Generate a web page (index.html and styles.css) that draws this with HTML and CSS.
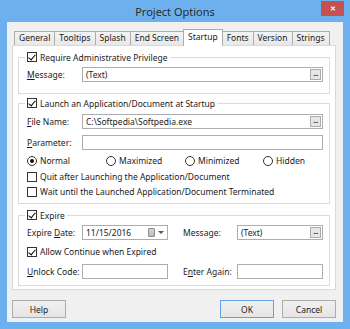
FILE: index.html
```html
<!doctype html>
<html lang="en">
  <head>
    <meta charset="utf-8">
    <title>Project Options</title>
    <link rel="stylesheet" href="styles.css">
  </head>
  <body>
    <div class="window">
      <div class="titlebar">
        <span class="title">Project Options</span>
        <span class="close">&#10005;</span>
      </div>

      <div class="client">
        <div class="tabs">
          <span class="tab">General</span>
          <span class="tab">Tooltips</span>
          <span class="tab">Splash</span>
          <span class="tab">End Screen</span>
          <span class="tab active">Startup</span>
          <span class="tab">Fonts</span>
          <span class="tab">Version</span>
          <span class="tab">Strings</span>
        </div>

        <div class="page">
          <!-- Admin -->
          <fieldset class="group g-admin">
            <legend><span class="check on"></span>Require Administrative Privilege</legend>
            <div class="row r-msg">
              <span class="lbl"><u>M</u>essage:</span>
              <div class="field grow">(Text)<span class="dots">...</span></div>
            </div>
          </fieldset>

          <!-- Launch -->
          <fieldset class="group g-launch">
            <legend><span class="check on"></span>Launch an Application/Document at Startup</legend>
            <div class="row r-file">
              <span class="lbl"><u>F</u>ile Name:</span>
              <div class="field grow">C:\Softpedia\Softpedia.exe<span class="dots">...</span></div>
            </div>
            <div class="row r-param">
              <span class="lbl"><u>P</u>arameter:</span>
              <div class="field grow"></div>
            </div>
            <div class="row radios">
              <span class="opt"><span class="radio on"></span>Normal</span>
              <span class="opt"><span class="radio"></span>Maximized</span>
              <span class="opt"><span class="radio"></span>Minimized</span>
              <span class="opt"><span class="radio"></span>Hidden</span>
            </div>
            <div class="row r-quit">
              <span class="check"></span>Quit after Launching the Application/Document
            </div>
            <div class="row r-wait">
              <span class="check"></span>Wait until the Launched Application/Document Terminated
            </div>
          </fieldset>

          <!-- Expire -->
          <fieldset class="group g-expire">
            <legend><span class="check on"></span>Expire</legend>
            <div class="row r-date">
              <span class="lbl">Expire <u>D</u>ate:</span>
              <div class="field short">11/15/2016
                <span class="cal"></span>
                <span class="arrow"></span>
              </div>
              <span class="lbl lbl2">Message:</span>
              <div class="field grow">(Text)<span class="dots">...</span></div>
            </div>
            <div class="row r-allow">
              <span class="check on"></span>Allow Continue when Expired
            </div>
            <div class="row r-unlock">
              <span class="lbl"><u>U</u>nlock Code:</span>
              <div class="field short"></div>
              <span class="lbl lbl2">E<u>n</u>ter Again:</span>
              <div class="field grow"></div>
            </div>
          </fieldset>
        </div>

        <div class="buttons">
          <button class="btn">Help</button>
          <span class="spacer"></span>
          <button class="btn default">OK</button>
          <button class="btn">Cancel</button>
        </div>
      </div>
    </div>
  </body>
</html>
```

FILE: styles.css
```css
* {
  margin: 0;
  padding: 0;
  box-sizing: border-box;
}

body {
  font-family: 'Noto Sans', sans-serif;
  font-size: 8.5px;
  color: #1a1a1a;
  background: #6cb1ee;
}

.window {
  width: 350px;
  height: 329px;
  background: #6cb1ee;
}

.titlebar {
  position: relative;
  height: 22px;
  display: flex;
  align-items: center;
  justify-content: center;
}

.title {
  font-size: 11px;
  color: #2b2b2b;
}

.close {
  position: absolute;
  top: 1px;
  right: 6px;
  width: 23px;
  height: 15px;
  background: #c75050;
  color: #fff;
  font-size: 6.5px;
  font-weight: bold;
  display: flex;
  align-items: center;
  justify-content: center;
}

.client {
  margin: 0 7px;
  height: 300px;
  background: #f0f0f0;
  padding: 7px 7px 0 5px;
}

/* tabs */
.tabs {
  display: flex;
  align-items: flex-end;
  height: 16px;
  padding-left: 2px;
}

.tab {
  height: 14px;
  line-height: 12px;
  padding: 0 4px;
  border: 1px solid #acacac;
  border-bottom: none;
  margin-left: -1px;
  background: linear-gradient(#f3f3f3, #e8e8e8);
  white-space: nowrap;
}

.tab:first-child {
  margin-left: 0;
}

.tab.active {
  position: relative;
  z-index: 1;
  height: 17px;
  margin-bottom: -1px;
  line-height: 14px;
  background: #fff;
}

.page {
  background: #fff;
  border: 1px solid #d9d9d9;
  padding: 5px 5px 3px 5px;
}

/* group boxes */
.group {
  border: 1px solid #dcdcdc;
  padding: 0 6px 0 8px;
  min-width: 0;
}

.group legend {
  display: flex;
  align-items: center;
  height: 12px;
  padding: 0 2px;
  margin-left: -2px;
}

.g-admin { padding-bottom: 11px; }
.g-launch { margin-top: 3px; padding-bottom: 4px; }
.g-expire { margin-top: 5px; padding-bottom: 6px; }

.row {
  display: flex;
  align-items: center;
  height: 15px;
  white-space: nowrap;
}

.r-msg { margin-top: 4px; }
.r-file { margin-top: 5px; }
.r-param { margin-top: 6px; }
.radios { margin-top: 3px; }
.r-quit { margin-top: 1px; }
.r-date { margin-top: 4px; }
.r-allow { margin-top: 4px; }
.r-unlock { margin-top: 5px; }

.lbl {
  width: 55px;
  flex: none;
}

.lbl2 {
  width: 54px;
  margin-left: 15px;
}

.field {
  height: 15px;
  border: 1px solid #abadb3;
  background: #fff;
  padding: 0 1px 0 3px;
  display: flex;
  align-items: center;
}

.field.grow { flex: 1; }
.field.short { width: 86px; flex: none; }

.dots {
  margin-left: auto;
  width: 11px;
  height: 11px;
  border: 1px solid #acacac;
  background: #e6e6e6;
  font-size: 7px;
  font-weight: bold;
  line-height: 7px;
  text-align: center;
  letter-spacing: -0.5px;
  color: #222;
}

.cal {
  margin-left: auto;
  width: 7px;
  height: 9px;
  border: 1px solid #8a8a8a;
  border-radius: 1px;
  background: linear-gradient(#d6d6d6, #bcbcbc);
}

.arrow {
  margin: 0 2px 0 3px;
  width: 0;
  height: 0;
  border-left: 3px solid transparent;
  border-right: 3px solid transparent;
  border-top: 3px solid #4a5a70;
}

/* check boxes and radios */
.check {
  width: 10px;
  height: 10px;
  border: 1px solid #333;
  background: #fff;
  margin-right: 3px;
  flex: none;
  position: relative;
}

.check.on::after {
  content: '';
  position: absolute;
  left: 2px;
  top: 0;
  width: 3px;
  height: 6px;
  border-right: 1.5px solid #000;
  border-bottom: 1.5px solid #000;
  transform: rotate(40deg);
}

.radios {
  display: grid;
  grid-template-columns: 79px 79px 78px 1fr;
}

.opt {
  display: flex;
  align-items: center;
}

.radio {
  width: 10px;
  height: 10px;
  border: 1px solid #333;
  border-radius: 50%;
  margin-right: 3px;
  display: flex;
  align-items: center;
  justify-content: center;
}

.radio.on::after {
  content: '';
  width: 4px;
  height: 4px;
  border-radius: 50%;
  background: #111;
}

/* buttons */
.buttons {
  display: flex;
  gap: 8px;
  margin-top: 10px;
}

.spacer { flex: 1; }

.btn {
  height: 18px;
  width: 54px;
  font-family: inherit;
  font-size: 8.5px;
  color: #1a1a1a;
  border: 1px solid #acacac;
  background: linear-gradient(#f0f0f0, #e5e5e5);
}

.btn.default {
  border-color: #5fa2e6;
}
```
